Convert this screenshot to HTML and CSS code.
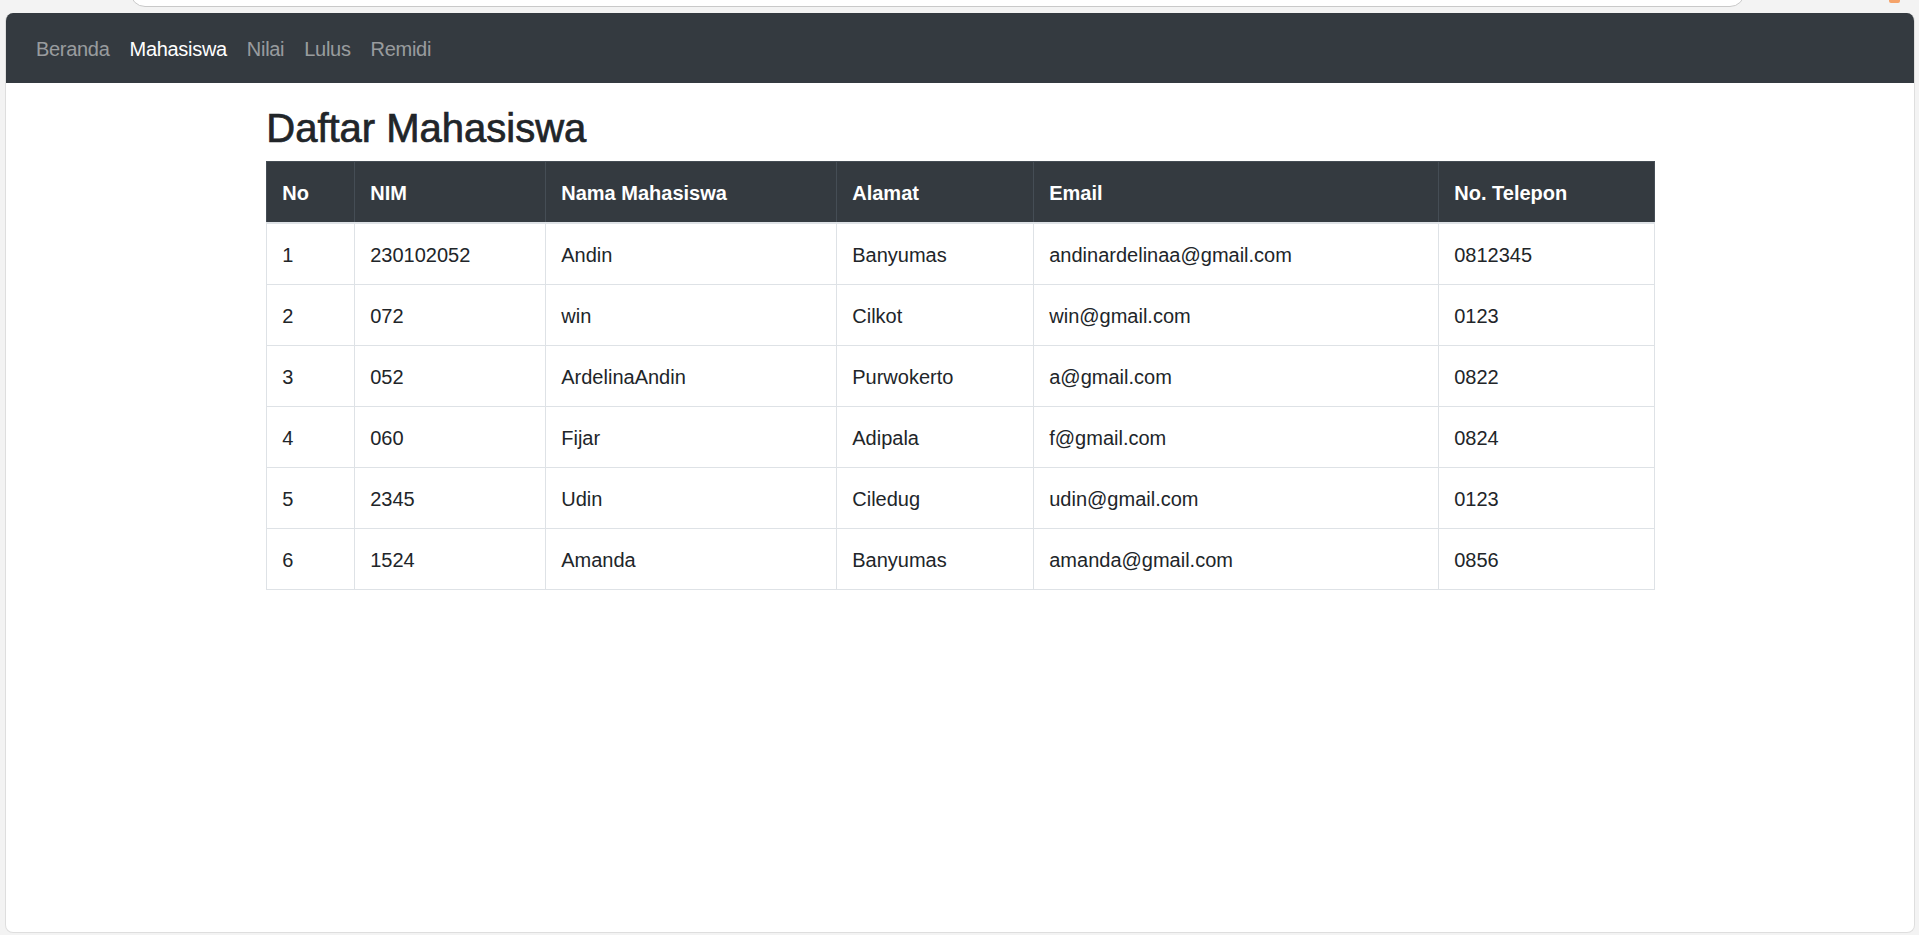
FILE: index.html
```html
<!DOCTYPE html>
<html lang="id">
<head>
<meta charset="utf-8">
<title>Daftar Mahasiswa</title>
<link rel="stylesheet" href="styles.css">
</head>
<body>
<div class="chrome">
  <div class="omnibox"></div>
  <div class="ext"></div>
</div>
<div class="window">
  <nav class="navbar">
    <a class="nav-link" href="#">Beranda</a>
    <a class="nav-link active" href="#">Mahasiswa</a>
    <a class="nav-link" href="#">Nilai</a>
    <a class="nav-link" href="#">Lulus</a>
    <a class="nav-link" href="#">Remidi</a>
  </nav>
  <main class="container">
    <h1 class="title">Daftar Mahasiswa</h1>
    <table class="table">
      <colgroup>
        <col class="c-no"><col class="c-nim"><col class="c-nama"><col class="c-alamat"><col class="c-email"><col class="c-telp">
      </colgroup>
      <thead>
        <tr><th>No</th><th>NIM</th><th>Nama Mahasiswa</th><th>Alamat</th><th>Email</th><th>No. Telepon</th></tr>
      </thead>
      <tbody>
        <tr><td>1</td><td>230102052</td><td>Andin</td><td>Banyumas</td><td>andinardelinaa@gmail.com</td><td>0812345</td></tr>
        <tr><td>2</td><td>072</td><td>win</td><td>Cilkot</td><td>win@gmail.com</td><td>0123</td></tr>
        <tr><td>3</td><td>052</td><td>ArdelinaAndin</td><td>Purwokerto</td><td>a@gmail.com</td><td>0822</td></tr>
        <tr><td>4</td><td>060</td><td>Fijar</td><td>Adipala</td><td>f@gmail.com</td><td>0824</td></tr>
        <tr><td>5</td><td>2345</td><td>Udin</td><td>Ciledug</td><td>udin@gmail.com</td><td>0123</td></tr>
        <tr><td>6</td><td>1524</td><td>Amanda</td><td>Banyumas</td><td>amanda@gmail.com</td><td>0856</td></tr>
      </tbody>
    </table>
  </main>
</div>
</body>
</html>
```
FILE: styles.css
```css
* { box-sizing: border-box; }
html, body { margin: 0; padding: 0; }
body {
  width: 1919px;
  height: 935px;
  overflow: hidden;
  background: #f3f3f3;
  font-family: "Liberation Sans", Arial, sans-serif;
  color: #212529;
}
.chrome {
  height: 13px;
  display: flex;
  position: relative;
}
.omnibox {
  margin-left: 130px;
  margin-top: -23px;
  width: 1615px;
  height: 30px;
  background: #ffffff;
  border: 1px solid #c9c9c9;
  border-radius: 15px;
}
.ext {
  position: absolute;
  left: 1889px;
  top: 0;
  width: 11px;
  height: 3px;
  background: #f5a36a;
  border-radius: 0 0 2px 2px;
}
.window {
  margin: 0 4px 0 5px;
  height: 920px;
  background: #ffffff;
  border: 1px solid #dedede;
  border-top: none;
  border-radius: 8px;
  overflow: hidden;
}
.navbar {
  display: flex;
  align-items: center;
  height: 70px;
  padding: 10px 20px;
  background: #343a40;
}
.nav-link {
  display: block;
  padding: 11px 10px 9px;
  font-size: 20px;
  line-height: 30px;
  letter-spacing: -0.3px;
  color: rgba(255, 255, 255, 0.5);
  text-decoration: none;
}
.nav-link.active { color: #ffffff; }
.container {
  width: 1425px;
  margin: 0 auto;
  padding: 21px 18.75px 0;
}
.title {
  margin: 0 0 9px;
  font-size: 40px;
  line-height: 48px;
  font-weight: 500;
  color: #212529;
  -webkit-text-stroke: 0.7px #212529;
}
.table {
  width: 100%;
  border-collapse: collapse;
  table-layout: fixed;
  font-size: 20px;
  line-height: 30px;
}
.c-no { width: 88px; }
.c-nim { width: 191px; }
.c-nama { width: 291px; }
.c-alamat { width: 197px; }
.c-email { width: 405px; }
.c-telp { width: 215.5px; }
.table th, .table td {
  padding: 16px 15px 14px;
  text-align: left;
  vertical-align: top;
  white-space: nowrap;
}
.table th {
  background: #343a40;
  color: #ffffff;
  font-weight: 700;
  border: 1px solid #454d55;
  border-bottom: 2px solid #dee2e6;
}
.table td {
  border: 1px solid #dee2e6;
  color: #212529;
}
```
